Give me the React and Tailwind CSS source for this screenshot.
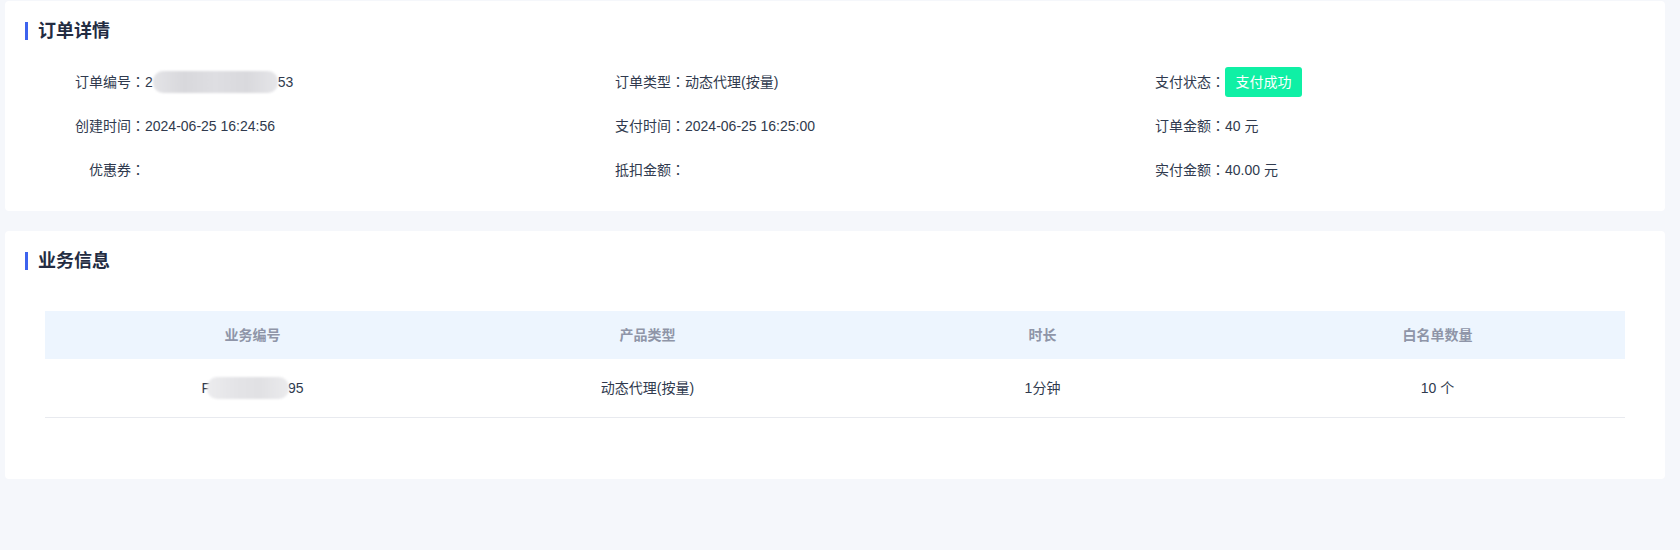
import React from "react";

const font = { fontFamily: '"Liberation Sans", "Noto Sans CJK SC", sans-serif' };
const colonFont = { fontFamily: '"Noto Sans CJK TC", sans-serif' };

function Blur({ w, className = "" }) {
  return (
    <span
      className={`inline-block h-[22px] align-middle rounded-[10px] blur-[1px] ${className}`}
      style={{ width: w }}
    />
  );
}

function Title({ children }) {
  return (
    <div className="flex h-[22px] items-center">
      <span className="h-[18px] w-[3px] bg-[#3d63ee]" />
      <span className="ml-[10px] text-[18px] font-bold leading-[22px] text-[#232c42]">{children}</span>
    </div>
  );
}

function Field({ label, children }) {
  return (
    <div className="flex h-[30px] items-center">
      <span className="w-[120px] text-right">
        {label}
        <span style={colonFont}>：</span>
      </span>
      <span className="flex items-center">{children}</span>
    </div>
  );
}

export default function App() {
  return (
    <div className="min-h-[550px] bg-[#f5f7fb] pl-[5px] pr-[15px] pt-px text-[14px] text-[#303a4e]" style={font}>
      <div className="rounded-[4px] bg-white px-5 pt-[19px] pb-[26px]">
        <Title>订单详情</Title>
        <div className="mt-[25px] flex flex-col gap-[14px]">
          <div className="grid grid-cols-3">
            <Field label="订单编号">
              <span>2</span>
              <Blur w={125} className="bg-[linear-gradient(90deg,#e4e4e7,#d8d8dc_25%,#dedee2_50%,#d9d9dd_75%,#e6e6e9)]" />
              <span>53</span>
            </Field>
            <Field label="订单类型">动态代理(按量)</Field>
            <Field label="支付状态">
              <span className="inline-flex h-[30px] w-[77px] items-center justify-center rounded-[3px] bg-[#0ff0a5] text-white">
                支付成功
              </span>
            </Field>
          </div>
          <div className="grid grid-cols-3">
            <Field label="创建时间">2024-06-25 16:24:56</Field>
            <Field label="支付时间">2024-06-25 16:25:00</Field>
            <Field label="订单金额">40 元</Field>
          </div>
          <div className="grid grid-cols-3">
            <Field label="优惠券"></Field>
            <Field label="抵扣金额"></Field>
            <Field label="实付金额">40.00 元</Field>
          </div>
        </div>
      </div>

      <div className="mt-5 rounded-[4px] bg-white px-10 pt-[19px] pb-[61px]">
        <div className="-mx-5">
          <Title>业务信息</Title>
        </div>
        <div className="mt-[39px]">
          <div className="grid h-[48px] grid-cols-4 items-center bg-[#edf5fe] font-bold text-[#8f95a8]">
            <div className="pl-5 text-center">业务编号</div>
            <div className="pl-5 text-center">产品类型</div>
            <div className="pl-5 text-center">时长</div>
            <div className="pl-5 text-center">白名单数量</div>
          </div>
          <div className="grid h-[59px] grid-cols-4 items-center border-b border-[#e8eaef]">
            <div className="flex items-center justify-center pl-5">
              <span>F</span>
              <Blur w={82} className="-ml-[3px] -mr-[1px] bg-[linear-gradient(90deg,#ececee,#e4e4e7_35%,#e1e1e4_65%,#ebebed)]" />
              <span>95</span>
            </div>
            <div className="pl-5 text-center">动态代理(按量)</div>
            <div className="pl-5 text-center">1分钟</div>
            <div className="pl-5 text-center">10 个</div>
          </div>
        </div>
      </div>
    </div>
  );
}
